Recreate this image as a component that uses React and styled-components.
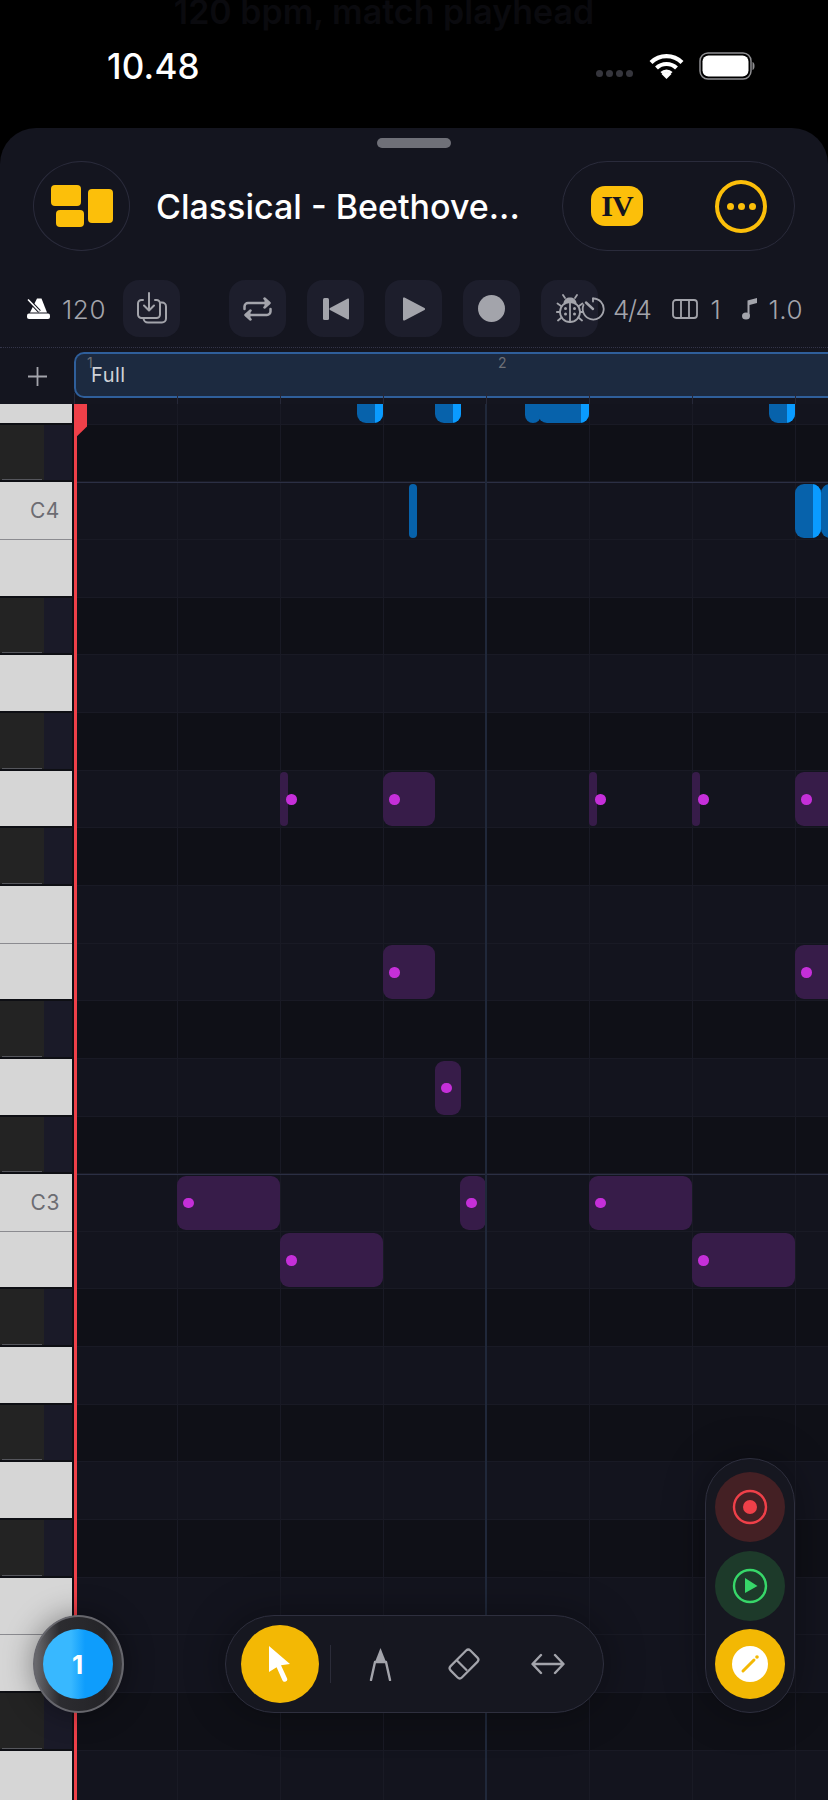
import React from 'react'
import styled, { createGlobalStyle } from 'styled-components'

const GlobalStyle = createGlobalStyle`
  html, body {
    margin: 0;
    padding: 0;
    background: #000;
  }
  * {
    box-sizing: border-box;
  }
`

const ROW_HEIGHT = 57.65
const LANE_LEFT = 74

const Screen = styled.div`
  width: 828px;
  height: 1800px;
  background: #000;
  font-family: Inter, "Liberation Sans", sans-serif;
  display: flex;
  flex-direction: column;
  overflow: hidden;
`

const StatusArea = styled.div`
  height: 128px;
  flex: none;
  display: flex;
  flex-direction: column;
`

const GhostBanner = styled.div`
  height: 26px;
  line-height: 24px;
  text-align: center;
  font-size: 34px;
  font-weight: 600;
  color: #0a0a0e;
  white-space: nowrap;
  padding-right: 60px;
`

const StatusRow = styled.div`
  height: 30px;
  margin-top: 25px;
  padding: 0 73px 0 107px;
  display: flex;
  align-items: center;
  justify-content: space-between;
`

const Clock = styled.span`
  font-size: 35px;
  font-weight: 500;
  color: #fff;
  letter-spacing: 0.2px;
`

const StatusIcons = styled.div`
  display: flex;
  align-items: center;
  gap: 15px;
`

const SignalDots = styled.div`
  display: flex;
  gap: 3px;
  margin: 14px 1px 0 0;
`

const SignalDot = styled.i`
  width: 7px;
  height: 7px;
  border-radius: 50%;
  background: #35353c;
`

const Sheet = styled.div`
  flex: 1;
  min-height: 0;
  background: #14151f;
  border-radius: 36px 36px 0 0;
  display: flex;
  flex-direction: column;
`

const Handle = styled.div`
  width: 74px;
  height: 10px;
  border-radius: 5px;
  margin: 10px auto 0;
  background: #6f7078;
`

const TopBar = styled.div`
  height: 90px;
  margin-top: 13px;
  padding: 0 33px;
  display: flex;
  align-items: center;
`

const LayoutButton = styled.div`
  width: 97px;
  height: 90px;
  flex: none;
  border-radius: 50%;
  border: 1.5px solid #2a2b3b;
  display: flex;
  align-items: center;
  justify-content: center;
`

const Title = styled.div`
  margin-left: 26px;
  font-size: 34px;
  font-weight: 500;
  color: #fff;
  white-space: nowrap;
`

const ActionPill = styled.div`
  margin-left: auto;
  width: 233px;
  height: 90px;
  border-radius: 45px;
  border: 1.5px solid #2a2b3b;
  padding: 0 27px 0 28px;
  display: flex;
  align-items: center;
  justify-content: space-between;
`

const KeyBadge = styled.div`
  width: 52px;
  height: 40px;
  border-radius: 14px;
  background: #fcbf0a;
  color: #14151f;
  font-family: "Liberation Serif", serif;
  font-weight: 700;
  font-size: 30px;
  letter-spacing: -1px;
  display: flex;
  align-items: center;
  justify-content: center;
`

const MoreRing = styled.div`
  width: 52px;
  height: 53px;
  border-radius: 50%;
  border: 4px solid #fcbf0a;
  display: flex;
  align-items: center;
  justify-content: center;
  gap: 4px;
`

const MoreDot = styled.i`
  width: 7px;
  height: 7px;
  border-radius: 50%;
  background: #fcbf0a;
`

const Toolbar = styled.div`
  height: 69px;
  margin-top: 28px;
  padding: 1px 0 10px 27px;
  display: flex;
  align-items: center;
  border-bottom: 1px dotted #34354a;
`

const TempoGroup = styled.div`
  width: 96px;
  flex: none;
  display: flex;
  align-items: center;
  gap: 12px;
`

const StatText = styled.span`
  font-size: 26px;
  font-weight: 300;
  color: #a3a4ab;
  letter-spacing: ${props => props.$spacing ?? 0.6}px;
  line-height: 1;
  padding-top: 2px;
`

const SquareButton = styled.div`
  width: 57px;
  height: 57px;
  flex: none;
  border-radius: 16px;
  background: #1d1e2c;
  display: flex;
  align-items: center;
  justify-content: center;
`

const Transport = styled.div`
  margin-left: 49px;
  display: flex;
  gap: 21px;
`

const StatsGroup = styled.div`
  margin-left: -17px;
  display: flex;
  align-items: center;
  gap: 21px;
`

const Stat = styled.div`
  display: flex;
  align-items: center;
  gap: ${props => props.$gap}px;
`

const RegionRow = styled.div`
  height: 56px;
  flex: none;
  position: relative;
  display: grid;
  grid-template-columns: ${LANE_LEFT}px 1fr;
  z-index: 1;
`

const AddCell = styled.div`
  display: flex;
  align-items: center;
  justify-content: center;
  height: 56px;
`

const Region = styled.div`
  margin-top: 4px;
  height: 46px;
  border: 2px solid #2f5f9b;
  border-right: none;
  border-radius: 10px 0 0 10px;
  background: #1c2a40;
  display: flex;
  align-items: center;
  padding-left: 15px;
  font-size: 20px;
  color: #cfd2d8;
  letter-spacing: 0.5px;
`

const BarNumber = styled.span`
  position: absolute;
  top: 6px;
  font-size: 14px;
  color: #6d7077;
  left: ${props => props.$x}px;
`

const BeatTicks = styled.div`
  position: absolute;
  left: ${LANE_LEFT}px;
  right: 0;
  bottom: 0;
  height: 11px;
  background-image: linear-gradient(to right, #262838 1px, transparent 1px);
  background-size: 103px 100%;
`

const Roll = styled.div`
  flex: 1;
  min-height: 0;
  position: relative;
  overflow: hidden;
`

const Row = styled.div`
  display: flex;
  position: relative;
  overflow: hidden;
  height: ${props => props.$height}px;
`

const Key = styled.div`
  width: 72px;
  flex: none;
  position: relative;
  display: flex;
  align-items: center;
  justify-content: flex-end;
  padding-right: 12px;
  font-size: 21px;
  letter-spacing: 0.6px;
  color: #6c6c72;
  background: ${props =>
    props.$black
      ? 'linear-gradient(to right, #232323 44px, #1a1a28 44px)'
      : '#d6d6d6'};
  border-bottom: ${props =>
    props.$black
      ? '2px solid #0e0f14'
      : props.$nextWhite
        ? '1px solid #8b8b90'
        : '2px solid #0e0f14'};

  &::after {
    content: ${props => (props.$black ? '""' : 'none')};
    position: absolute;
    left: 2px;
    width: 40px;
    bottom: 0;
    height: 1px;
    background: #55565c;
  }
`

const KeyGap = styled.div`
  width: 2px;
  flex: none;
  background: #0e0f14;
`

const Lane = styled.div`
  flex: 1;
  position: relative;
  background-color: ${props => (props.$black ? '#0f1017' : '#13141e')};
  background-image: linear-gradient(to right, #191a25 1.5px, transparent 1.5px);
  background-size: 103px 100%;
  border-bottom: 1px solid #191a25;
  border-top: ${props => (props.$octave ? '1px solid #2b2f44' : 'none')};
`

const BlueNote = styled.div`
  position: absolute;
  bottom: 1px;
  height: 54px;
  background: #0762ab;
  overflow: hidden;
  border-radius: ${props => (props.$thin ? 4 : 9)}px;

  &::after {
    content: ${props => (props.$accent ? '""' : 'none')};
    position: absolute;
    top: 0;
    right: 0;
    bottom: 0;
    width: 8px;
    background: #0a9bff;
  }
`

const PurpleNote = styled.div`
  position: absolute;
  bottom: 1px;
  height: 54px;
  background: #371c49;
  border-radius: ${props => (props.$thin ? 4 : 9)}px;
`

const NoteDot = styled.i`
  position: absolute;
  top: 50%;
  left: 6px;
  width: 10.5px;
  height: 10.5px;
  margin-top: -5px;
  border-radius: 50%;
  background: #c52fd9;
`

const BarLine = styled.div`
  position: absolute;
  top: -11px;
  bottom: 0;
  left: 485px;
  width: 2px;
  background: #20283a;
`

const Playhead = styled.div`
  position: absolute;
  top: 0;
  bottom: 0;
  left: 74px;
  width: 3px;
  background: #ef4049;
`

const PlayheadFlag = styled.div`
  position: absolute;
  top: 0;
  left: 0;
  width: 13px;
  height: 32px;
  background: #ef4049;
  clip-path: polygon(0 0, 100% 0, 100% 70%, 25% 100%, 0 100%);
`

const TrackKnob = styled.div`
  position: absolute;
  left: 33px;
  bottom: 87px;
  width: 91px;
  height: 98px;
  padding-right: 2px;
  border-radius: 50%;
  background: linear-gradient(to right, #6a6a6e, #2c2c30 28%, #242428 80%, #3a3a3e);
  border: 2px solid #66666c;
  box-shadow: 0 0 30px rgba(0, 0, 0, 0.4);
  display: flex;
  align-items: center;
  justify-content: center;
`

const TrackFace = styled.div`
  width: 70px;
  height: 70px;
  border-radius: 50%;
  background: linear-gradient(to right, #38b8ff 40%, #0e9dfc 60%);
  color: #fff;
  font-size: 26px;
  font-weight: 700;
  display: flex;
  align-items: center;
  justify-content: center;
`

const ToolPill = styled.div`
  position: absolute;
  left: 225px;
  bottom: 87px;
  width: 379px;
  height: 98px;
  border-radius: 49px;
  background: #161720;
  border: 1.5px solid #2e2f3e;
  box-shadow: 0 0 40px rgba(0, 0, 0, 0.35);
  padding-left: 15px;
  display: flex;
  align-items: center;
`

const ActiveTool = styled.div`
  width: 78px;
  height: 78px;
  flex: none;
  border-radius: 50%;
  background: #f3b804;
  display: flex;
  align-items: center;
  justify-content: center;
`

const ToolDivider = styled.div`
  width: 1px;
  height: 38px;
  background: #2b2c39;
  margin: 0 7px 0 11px;
`

const ToolSlot = styled.div`
  width: 84px;
  flex: none;
  display: flex;
  align-items: center;
  justify-content: center;
`

const ModePill = styled.div`
  position: absolute;
  left: 705px;
  bottom: 87px;
  width: 90px;
  height: 255px;
  border-radius: 45px;
  background: #161720;
  border: 1.5px solid #2e2f3e;
  box-shadow: 0 0 40px rgba(0, 0, 0, 0.35);
  padding: 13px 0;
  display: flex;
  flex-direction: column;
  align-items: center;
  justify-content: space-between;
`

const ModeButton = styled.div`
  width: 70px;
  height: 70px;
  border-radius: 50%;
  background: ${props => props.$bg};
  display: flex;
  align-items: center;
  justify-content: center;
`

const GREY = '#a3a4ab'

const Wifi = () => (
  <svg width="35" height="26" viewBox="0 0 35 26" fill="none" stroke="#fff" strokeWidth="4.2">
    <path d="M2 9.5a22 22 0 0 1 31 0" />
    <path d="M7.5 15a14.5 14.5 0 0 1 20 0" />
    <path d="M12.5 20a7 7 0 0 1 10 0" strokeWidth="3" />
    <path d="M17.5 26l-5-5a7 7 0 0 1 10 0z" fill="#fff" stroke="none" />
  </svg>
)

const Battery = () => (
  <svg width="56" height="28" viewBox="0 0 56 28">
    <rect x="1" y="1" width="51" height="26" rx="8" fill="none" stroke="#8f8f92" strokeWidth="1.5" />
    <rect x="3.5" y="3.5" width="46" height="21" rx="6" fill="#fff" />
    <path d="M53.5 10c1.5.5 2 2 2 4s-.5 3.5-2 4z" fill="#8f8f92" />
  </svg>
)

const LayoutIcon = () => (
  <svg width="62" height="42" viewBox="0 0 62 42" fill="#fcbf0a">
    <rect x="0" y="0" width="30" height="21" rx="4" />
    <rect x="5" y="25" width="28" height="17" rx="4" />
    <rect x="37" y="4" width="25" height="34" rx="4" />
  </svg>
)

const Metronome = () => (
  <svg width="23" height="21" viewBox="0 0 23 21" fill="#fff">
    <path d="M10 .5h4.500l5.500 14H3z" />
    <rect x="0" y="15.500" width="23" height="5.500" rx="2" />
    <path d="M1 1.500l11.500 12" stroke="#14151f" strokeWidth="3.600" />
    <path d="M1 1.500l11.500 12" stroke="#fff" strokeWidth="1.600" />
  </svg>
)

const Import = () => (
  <svg width="30" height="34" viewBox="0 0 30 34" fill="none" stroke={GREY} strokeWidth="2" strokeLinecap="round" strokeLinejoin="round">
    <path d="M6 8H4.5A3.5 3.5 0 0 0 1 11.5v11A3.5 3.5 0 0 0 4.5 26h15a3.5 3.5 0 0 0 3.5-3.5v-11A3.5 3.5 0 0 0 19.500 8H18" />
    <path d="M12 1v17M7 13.500l5 5 5-5" />
    <path d="M24 10.500h1A4 4 0 0 1 29 14.500v12a4 4 0 0 1-4 4H11a4.500 4.500 0 0 1-4.500-4.500" />
  </svg>
)

const Loop = () => (
  <svg width="29" height="24" viewBox="0 0 29 24" fill="none" stroke={GREY} strokeWidth="2.5" strokeLinecap="round" strokeLinejoin="round">
    <path d="M1.500 12V9.500a3.500 3.500 0 0 1 3.500-3.500h21" />
    <path d="M21.500 1.500l5 4.500-5 4.500" fill={GREY} />
    <path d="M27.500 12v2.500a3.500 3.500 0 0 1-3.500 3.500H3" />
    <path d="M7.500 13.500l-5 4.500 5 4.500" fill={GREY} />
  </svg>
)

const Previous = () => (
  <svg width="26" height="22" viewBox="0 0 26 22" fill={GREY}>
    <rect x="0" y="0" width="6" height="22" rx="1.500" />
    <path d="M26 1.500v19a1 1 0 0 1-1.600.8L7 12a1.200 1.200 0 0 1 0-2L24.400.7A1 1 0 0 1 26 1.500z" />
  </svg>
)

const Play = () => (
  <svg width="22" height="24" viewBox="0 0 22 24" fill={GREY}>
    <path d="M0 1.500v21a1 1 0 0 0 1.500.9l20-10.500a1 1 0 0 0 0-1.800L1.500.6A1 1 0 0 0 0 1.500z" />
  </svg>
)

const RecordDot = () => (
  <svg width="27" height="27" viewBox="0 0 27 27">
    <circle cx="13.500" cy="13.500" r="13.500" fill={GREY} />
  </svg>
)

const Bug = () => (
  <svg width="28" height="29" viewBox="0 0 28 29" fill="none" stroke={GREY} strokeWidth="1.800" strokeLinecap="round">
    <path d="M7.500 9c.5-3.500 3-5.500 6.500-5.500s6 2 6.500 5.500z" fill={GREY} stroke="none" />
    <path d="M9 4L7 1M19 4l2-3M5 12L1.500 9.500M23 12l3.500-2.500M3.500 18H.8M24.500 18h2.700M5 24l-3 2.500M23 24l3 2.500" />
    <ellipse cx="14" cy="18" rx="10" ry="10" />
    <path d="M14 9v19" />
    <circle cx="9.500" cy="14.500" r="1.500" fill={GREY} stroke="none" />
    <circle cx="18.500" cy="14.500" r="1.500" fill={GREY} stroke="none" />
    <circle cx="9.500" cy="20" r="1.500" fill={GREY} stroke="none" />
    <circle cx="18.500" cy="20" r="1.500" fill={GREY} stroke="none" />
  </svg>
)

const Timer = () => (
  <svg width="24" height="24" viewBox="0 0 24 24" fill="none" stroke={GREY} strokeWidth="1.800" strokeLinecap="round">
    <path d="M12 1.500A10.500 10.500 0 1 1 2.500 8" />
    <path d="M5 5.500l7 6.500" strokeWidth="2.400" />
    <path d="M12 1.500v3" />
  </svg>
)

const Bars = () => (
  <svg width="26" height="20" viewBox="0 0 26 20" fill="none" stroke={GREY} strokeWidth="1.800">
    <rect x="1" y="1" width="24" height="18" rx="3" />
    <path d="M9 1v18M17 1v18" />
  </svg>
)

const NoteGlyph = () => (
  <svg width="15" height="23" viewBox="0 0 15 23" fill={GREY}>
    <path d="M5.500 3.500L15 1v5L7.500 8v11H5.500z" />
    <ellipse cx="4" cy="19" rx="4" ry="3.600" />
  </svg>
)

const Plus = () => (
  <svg width="19" height="19" viewBox="0 0 19 19" stroke="#a3a4ab" strokeWidth="1.800">
    <path d="M9.500 0v19M0 9.500h19" />
  </svg>
)

const Cursor = () => (
  <svg width="22" height="36" viewBox="0 0 22 36" fill="#fff">
    <path d="M0 0l21 18-9 1.200 6 13a2.500 2.500 0 0 1-4.600 2l-5.800-13L0 26z" />
  </svg>
)

const Compass = () => (
  <svg width="23" height="33" viewBox="0 0 23 33" fill="none" stroke={GREY} strokeWidth="2.400" strokeLinecap="round" strokeLinejoin="round">
    <path d="M11.500 0l5.500 14H6z" fill={GREY} stroke="none" />
    <path d="M6 14h11M6 14L2 32M17 14l4 18" />
  </svg>
)

const Eraser = () => (
  <svg width="36" height="36" viewBox="0 0 36 36" fill="none" stroke={GREY} strokeWidth="2.200" strokeLinejoin="round">
    <rect x="4" y="10" width="28" height="16" rx="3" transform="rotate(-45 18 18)" />
    <path d="M7 17.500L17.500 28" transform="translate(3.500 -3.500)" />
  </svg>
)

const Arrows = () => (
  <svg width="34" height="22" viewBox="0 0 34 22" fill="none" stroke={GREY} strokeWidth="2.400" strokeLinecap="round" strokeLinejoin="round">
    <path d="M2 11h30M10 2l-8.500 9L10 20M24 2l8.500 9L24 20" />
  </svg>
)

const RecordMode = () => (
  <svg width="36" height="36" viewBox="0 0 36 36" fill="none">
    <circle cx="18" cy="18" r="16" stroke="#ef4049" strokeWidth="2.400" />
    <circle cx="18" cy="18" r="7" fill="#ef4049" />
  </svg>
)

const PlayMode = () => (
  <svg width="36" height="36" viewBox="0 0 36 36" fill="none">
    <circle cx="18" cy="18" r="16" stroke="#37d769" strokeWidth="2.400" />
    <path d="M13 10l12.500 8L13 25z" fill="#37d769" />
  </svg>
)

const EditMode = () => (
  <svg width="36" height="36" viewBox="0 0 36 36">
    <circle cx="18" cy="18" r="18" fill="#fff" />
    <path d="M11 25l11-11" stroke="#f3b804" strokeWidth="3" strokeLinecap="round" />
    <circle cx="25" cy="11" r="1.800" fill="#f3b804" />
  </svg>
)

// pitches from the top of the roll, the first one is cut by the header
const PITCHES = [
  { id: 'D4' },
  { id: 'Db4', black: true },
  { id: 'C4', label: 'C4', octave: true },
  { id: 'B3' },
  { id: 'Bb3', black: true },
  { id: 'A3' },
  { id: 'Ab3', black: true },
  { id: 'G3' },
  { id: 'Gb3', black: true },
  { id: 'F3' },
  { id: 'E3' },
  { id: 'Eb3', black: true },
  { id: 'D3' },
  { id: 'Db3', black: true },
  { id: 'C3', label: 'C3', octave: true },
  { id: 'B2' },
  { id: 'Bb2', black: true },
  { id: 'A2' },
  { id: 'Ab2', black: true },
  { id: 'G2' },
  { id: 'Gb2', black: true },
  { id: 'F2' },
  { id: 'E2' },
  { id: 'Eb2', black: true },
  { id: 'D2' }
]

// x is the page position of the note start
const BLUE_NOTES = {
  D4: [
    { x: 357, w: 26, accent: true },
    { x: 435, w: 26, accent: true },
    { x: 525, w: 16 },
    { x: 538, w: 51, accent: true },
    { x: 769, w: 26, accent: true }
  ],
  C4: [
    { x: 409, w: 8 },
    { x: 795, w: 26, accent: true },
    { x: 821, w: 26, accent: true }
  ]
}

const PURPLE_NOTES = {
  G3: [
    { x: 280, w: 8 },
    { x: 383, w: 52 },
    { x: 589, w: 8 },
    { x: 692, w: 8 },
    { x: 795, w: 52 }
  ],
  E3: [{ x: 383, w: 52 }, { x: 795, w: 52 }],
  D3: [{ x: 435, w: 26 }],
  C3: [{ x: 177, w: 103 }, { x: 460, w: 26 }, { x: 589, w: 103 }],
  B2: [{ x: 280, w: 103 }, { x: 692, w: 103 }]
}

const noteBox = note => ({ left: note.x - LANE_LEFT, width: note.w })

const PitchRow = ({ pitch, next, height }) => (
  <Row $height={height}>
    <Key $black={pitch.black} $nextWhite={next && !next.black}>
      {pitch.label}
    </Key>
    <KeyGap />
    <Lane $black={pitch.black} $octave={pitch.octave}>
      {(BLUE_NOTES[pitch.id] || []).map(note => (
        <BlueNote
          key={note.x}
          $accent={note.accent}
          $thin={note.w < 10}
          style={noteBox(note)}
        />
      ))}
      {(PURPLE_NOTES[pitch.id] || []).map(note => (
        <PurpleNote key={note.x} $thin={note.w < 10} style={noteBox(note)}>
          <NoteDot />
        </PurpleNote>
      ))}
    </Lane>
  </Row>
)

const App = () => (
  <Screen>
    <GlobalStyle />
    <StatusArea>
      <GhostBanner>120 bpm, match playhead</GhostBanner>
      <StatusRow>
        <Clock>10.48</Clock>
        <StatusIcons>
          <SignalDots>
            <SignalDot />
            <SignalDot />
            <SignalDot />
            <SignalDot />
          </SignalDots>
          <Wifi />
          <Battery />
        </StatusIcons>
      </StatusRow>
    </StatusArea>

    <Sheet>
      <Handle />
      <TopBar>
        <LayoutButton>
          <LayoutIcon />
        </LayoutButton>
        <Title>Classical - Beethove...</Title>
        <ActionPill>
          <KeyBadge>IV</KeyBadge>
          <MoreRing>
            <MoreDot />
            <MoreDot />
            <MoreDot />
          </MoreRing>
        </ActionPill>
      </TopBar>

      <Toolbar>
        <TempoGroup>
          <Metronome />
          <StatText>120</StatText>
        </TempoGroup>
        <SquareButton>
          <Import />
        </SquareButton>
        <Transport>
          <SquareButton>
            <Loop />
          </SquareButton>
          <SquareButton>
            <Previous />
          </SquareButton>
          <SquareButton>
            <Play />
          </SquareButton>
          <SquareButton>
            <RecordDot />
          </SquareButton>
          <SquareButton>
            <Bug />
          </SquareButton>
        </Transport>
        <StatsGroup>
          <Stat $gap={8}>
            <Timer />
            <StatText $spacing={-1.4}>4/4</StatText>
          </Stat>
          <Stat $gap={13}>
            <Bars />
            <StatText>1</StatText>
          </Stat>
          <Stat $gap={11}>
            <NoteGlyph />
            <StatText>1.0</StatText>
          </Stat>
        </StatsGroup>
      </Toolbar>

      <RegionRow>
        <AddCell>
          <Plus />
        </AddCell>
        <Region>Full</Region>
        <BarNumber $x={87}>1</BarNumber>
        <BarNumber $x={498}>2</BarNumber>
        <BeatTicks />
      </RegionRow>

      <Roll>
        {PITCHES.map((pitch, index) => (
          <PitchRow
            key={pitch.id}
            pitch={pitch}
            next={PITCHES[index + 1]}
            height={index === 0 ? 20.85 : ROW_HEIGHT}
          />
        ))}
        <BarLine />
        <Playhead>
          <PlayheadFlag />
        </Playhead>
        <TrackKnob>
          <TrackFace>1</TrackFace>
        </TrackKnob>
        <ToolPill>
          <ActiveTool>
            <Cursor />
          </ActiveTool>
          <ToolDivider />
          <ToolSlot>
            <Compass />
          </ToolSlot>
          <ToolSlot>
            <Eraser />
          </ToolSlot>
          <ToolSlot>
            <Arrows />
          </ToolSlot>
        </ToolPill>
        <ModePill>
          <ModeButton $bg="#442024">
            <RecordMode />
          </ModeButton>
          <ModeButton $bg="#1d3a2a">
            <PlayMode />
          </ModeButton>
          <ModeButton $bg="#f3b804">
            <EditMode />
          </ModeButton>
        </ModePill>
      </Roll>
    </Sheet>
  </Screen>
)

export default App
